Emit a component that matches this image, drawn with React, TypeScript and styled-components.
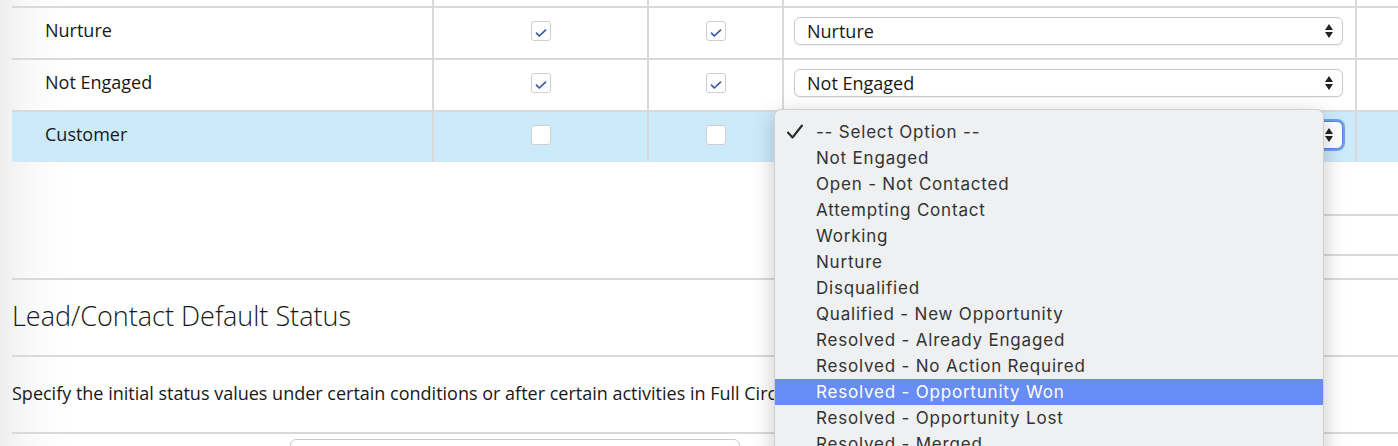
import React from 'react'
import styled, { createGlobalStyle, css } from 'styled-components'

const Line = '#d9d9d9'
const Ink = '#181818'

const GlobalStyle = createGlobalStyle`
  html, body {
    margin: 0;
    padding: 0;
    overflow: hidden;
  }
  body {
    width: 1398px;
    height: 446px;
    background: linear-gradient(to right, #ededed 0, #f4f4f4 14px, #fbfbfb 40px, #ffffff 70px);
    font-family: 'Open Sans', 'Liberation Sans', sans-serif;
    color: ${Ink};
  }
`

const statuses = ['Nurture', 'Not Engaged']

const options = [
  'Not Engaged',
  'Open - Not Contacted',
  'Attempting Contact',
  'Working',
  'Nurture',
  'Disqualified',
  'Qualified - New Opportunity',
  'Resolved - Already Engaged',
  'Resolved - No Action Required',
  'Resolved - Opportunity Won',
  'Resolved - Opportunity Lost',
  'Resolved - Merged',
]

export default function App() {
  return (
    <>
      <GlobalStyle />
      <Page>
        <Table>
          <StubRow>
            <Cell />
            <Cell />
            <Cell />
            <Cell />
            <Cell $last />
          </StubRow>
          {statuses.map(s => (
            <Row key={s}>
              <NameCell>{s}</NameCell>
              <CheckCell>
                <Checkbox checked />
              </CheckCell>
              <CheckCell>
                <Checkbox checked />
              </CheckCell>
              <SelectCell>
                <Select>
                  <span>{s}</span>
                  <Arrows />
                </Select>
              </SelectCell>
              <Cell $last />
            </Row>
          ))}
          <Row $active>
            <NameCell>Customer</NameCell>
            <CheckCell>
              <Checkbox />
            </CheckCell>
            <CheckCell>
              <Checkbox />
            </CheckCell>
            <SelectCell>
              <Select $focused>
                <Arrows />
              </Select>
              <Menu>
                <MenuItem>
                  <Tick>
                    <svg width="18" height="16" viewBox="0 0 18 16">
                      <path
                        d="M2 8.5 L6.5 13.5 L16 1.5"
                        fill="none"
                        stroke="#2b2b2b"
                        strokeWidth="2.1"
                        strokeLinecap="round"
                        strokeLinejoin="round"
                      />
                    </svg>
                  </Tick>
                  -- Select Option --
                </MenuItem>
                {options.map(o => (
                  <MenuItem key={o} $selected={o === 'Resolved - Opportunity Won'}>
                    {o}
                  </MenuItem>
                ))}
              </Menu>
            </SelectCell>
            <Cell $last />
          </Row>
        </Table>

        <Actions>
          <ActionsBar />
        </Actions>

        <Heading>Lead/Contact Default Status</Heading>
        <Description>
          Specify the initial status values under certain conditions or after certain
          activities in Full Circle Insights.
        </Description>
        <FieldRow>
          <FieldLabel>Initial Lead status</FieldLabel>
          <FieldSelect>
            <span>Not Engaged</span>
            <Arrows />
          </FieldSelect>
        </FieldRow>
      </Page>
    </>
  )
}

function Checkbox({ checked }: { checked?: boolean }) {
  return (
    <Box>
      {checked && (
        <svg width="20" height="20" viewBox="0 0 20 20">
          <path
            d="M5.5 12.2 L8.3 15 L14.5 9.2"
            fill="none"
            stroke="#3656a8"
            strokeWidth="1.7"
            strokeLinecap="round"
            strokeLinejoin="round"
          />
        </svg>
      )}
    </Box>
  )
}

function Arrows() {
  return (
    <ArrowIcon width="10" height="16" viewBox="0 0 10 16">
      <path d="M5 1 L9 7 L1 7 Z" fill="#222" />
      <path d="M5 15 L9 9 L1 9 Z" fill="#222" />
    </ArrowIcon>
  )
}

const Page = styled.div`
  padding-left: 12px;
  display: flex;
  flex-direction: column;
`

const Table = styled.div`
  display: flex;
  flex-direction: column;
`

const rowGrid = css`
  display: grid;
  grid-template-columns: 422px 215px 135px 573px 1fr;
`

const StubRow = styled.div`
  ${rowGrid};
  height: 6px;
`

const Row = styled.div<{ $active?: boolean }>`
  ${rowGrid};
  height: 50px;
  border-top: 2px solid ${Line};
  background: ${p => (p.$active ? '#cdeafb' : 'transparent')};
`

const Cell = styled.div<{ $last?: boolean }>`
  display: flex;
  align-items: center;
  padding-bottom: 4px;
  box-sizing: border-box;
  border-right: ${p => (p.$last ? 'none' : `2px solid ${Line}`)};
`

const NameCell = styled(Cell)`
  padding-left: 33px;
  padding-bottom: 6px;
  font-size: 18px;
`

const CheckCell = styled(Cell)`
  justify-content: center;
  padding-left: 1px;
`

const SelectCell = styled(Cell)`
  position: relative;
  padding-left: 10px;
  padding-right: 12px;
`

const Box = styled.div`
  width: 20px;
  height: 20px;
  box-sizing: border-box;
  border: 1px solid #cfcfcf;
  border-radius: 3px;
  background: #fff;
  display: flex;

  svg {
    margin: -1px;
  }
`

const Select = styled.div<{ $focused?: boolean }>`
  flex: 1;
  height: 28px;
  box-sizing: border-box;
  display: flex;
  align-items: center;
  justify-content: space-between;
  padding: 0 8px 0 12px;
  border: 1px solid #cacaca;
  border-radius: 6px;
  background: #fff;
  font-size: 18px;
  box-shadow: 0 1px 1px rgba(0, 0, 0, 0.06);

  ${p =>
    p.$focused &&
    css`
      justify-content: flex-end;
      border: 1px solid #4f86e8;
      box-shadow: 0 0 0 2px rgba(80, 136, 232, 0.75);
    `}
`

const ArrowIcon = styled.svg`
  flex: none;
`

const Menu = styled.div`
  position: absolute;
  left: -10px;
  top: -3px;
  width: 550px;
  box-sizing: border-box;
  padding-top: 9px;
  padding-bottom: 20px;
  background: #eef0f1;
  border: 1px solid rgba(0, 0, 0, 0.13);
  border-radius: 7px;
  box-shadow: 0 6px 22px rgba(0, 0, 0, 0.22);
  z-index: 10;
`

const MenuItem = styled.div<{ $selected?: boolean }>`
  position: relative;
  height: 26px;
  display: flex;
  align-items: center;
  padding-left: 41px;
  font-family: 'Inter', 'Liberation Sans', sans-serif;
  font-size: 17px;
  letter-spacing: 0.8px;
  color: ${p => (p.$selected ? '#fff' : '#333')};
  background: ${p => (p.$selected ? '#678cf4' : 'transparent')};
`

const Tick = styled.span`
  position: absolute;
  left: 11px;
  top: 5px;
  display: flex;
`

const Actions = styled.div`
  display: flex;
  justify-content: flex-end;
  padding-top: 52px;
  height: 116px;
  box-sizing: border-box;
`

const ActionsBar = styled.div`
  width: 420px;
  height: 42px;
  box-sizing: border-box;
  border-top: 2px solid ${Line};
  border-bottom: 2px solid ${Line};
`

const Heading = styled.h2`
  margin: 0;
  height: 77px;
  box-sizing: border-box;
  border-top: 2px solid ${Line};
  display: flex;
  align-items: center;
  padding-bottom: 4px;
  font-size: 27px;
  font-weight: 300;
  color: ${Ink};
`

const Description = styled.p`
  margin: 0;
  height: 77px;
  box-sizing: border-box;
  border-top: 2px solid ${Line};
  display: flex;
  align-items: center;
  padding-bottom: 4px;
  font-size: 18px;
  white-space: nowrap;
`

const FieldRow = styled.div`
  display: grid;
  grid-template-columns: 278px 450px;
  border-top: 2px solid ${Line};
  padding-top: 5px;
`

const FieldLabel = styled.div`
  text-align: right;
  padding-right: 40px;
  padding-top: 6px;
  font-size: 16px;
`

const FieldSelect = styled(Select)`
  font-size: 17px;
`
